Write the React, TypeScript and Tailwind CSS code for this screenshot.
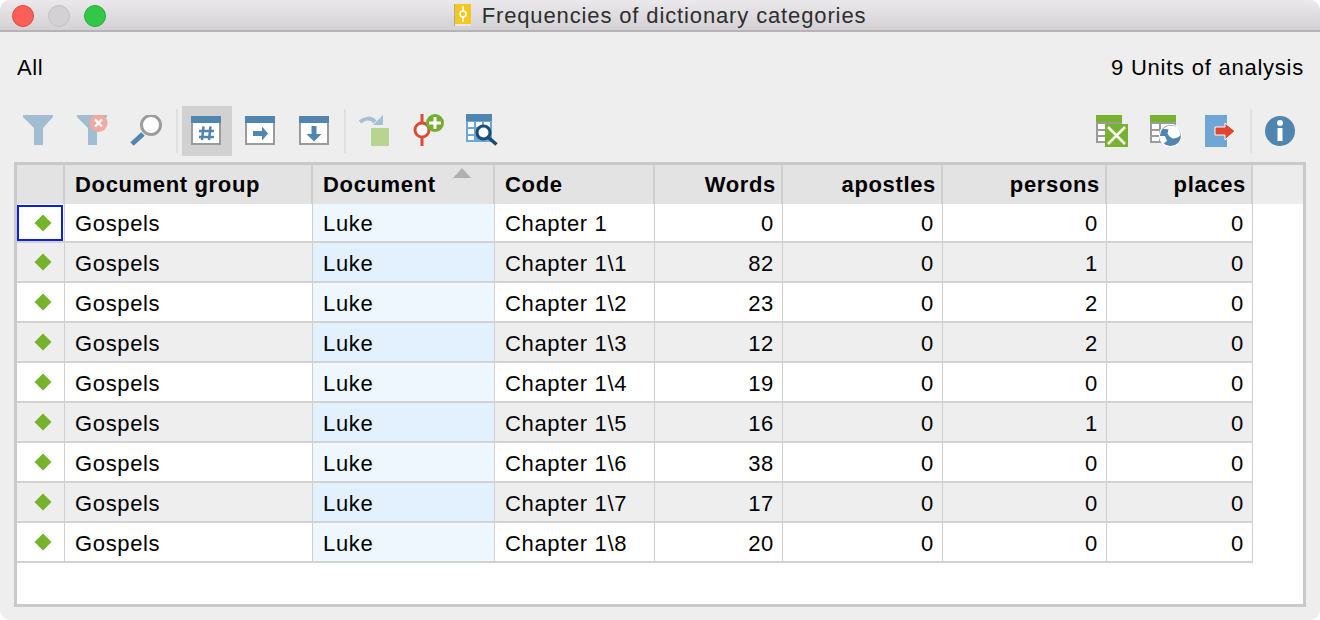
const FONT = "font-['Liberation_Sans',Arial,sans-serif]";

function Filter({ badge }: { badge?: boolean }) {
  return (
    <svg width="32" height="32" viewBox="-1 1 32 32">
      <path d="M0 1h30v2L20 14v17h-9V14L0 3z" fill="#a2bcd2" />
      {badge && (
        <>
          <circle cx="21.500" cy="9" r="9" fill="#efaba0" />
          <path d="M18 5.500l7 7M25 5.500l-7 7" stroke="#fff" strokeWidth="2.400" />
        </>
      )}
    </svg>
  );
}

function Magnifier() {
  return (
    <svg width="32" height="32" viewBox="0 1 32 32">
      <path d="M2 30l11-10" stroke="#5085b0" strokeWidth="5" />
      <circle cx="21" cy="11" r="9.500" fill="#fff" stroke="#9c9c9c" strokeWidth="3" />
    </svg>
  );
}

function WinIcon({ children }: { children: React.ReactNode }) {
  return (
    <svg width="30" height="30" viewBox="0 0 30 30" className="-translate-x-px">
      <rect x="1" y="3" width="28" height="25" fill="#fff" stroke="#9b9b9b" strokeWidth="2" />
      <rect x="0" y="0" width="30" height="7" fill="#5085b0" />
      {children}
    </svg>
  );
}

function Undo() {
  return (
    <svg width="32" height="32" viewBox="0 1 32 32">
      <rect x="12" y="14" width="18" height="18" fill="#b7d491" />
      <path d="M1 8c5-4 11-5 15 0" fill="none" stroke="#a6c0d6" strokeWidth="4" />
      <path d="M14 11h10V1z" fill="#a6c0d6" />
    </svg>
  );
}

function CodePlus() {
  return (
    <svg width="32" height="34" viewBox="0 1 32 34">
      <path d="M9 1v32" stroke="#df4a35" strokeWidth="3" />
      <circle cx="9" cy="17" r="7" fill="#fff" stroke="#df4a35" strokeWidth="3" />
      <circle cx="22" cy="10" r="9" fill="#72ae2b" />
      <path d="M22 4v12M16 10h12" stroke="#fff" strokeWidth="3" />
    </svg>
  );
}

function TableSearch() {
  return (
    <svg width="34" height="34" viewBox="0 0 34 34">
      <rect x="0" y="0" width="26" height="28" fill="#6ea6d5" />
      <rect x="0" y="0" width="26" height="7" fill="#5085b0" />
      <path d="M2 8h6v5H2zM10 8h6v5h-6zM18 8h6v5h-6zM2 15h6v5H2zM2 22h6v4H2z" fill="#fff" />
      <circle cx="17.500" cy="18.500" r="6.500" fill="#fff" stroke="#1b4d7a" strokeWidth="3" />
      <path d="M22.500 23.500l8 7" stroke="#1b4d7a" strokeWidth="3.500" />
    </svg>
  );
}

function SmallGrid({ color }: { color: string }) {
  return (
    <>
      <rect x="0" y="0" width="26" height="28" fill="#9b9b9b" />
      <rect x="0" y="0" width="26" height="7" fill={color} />
      <path d="M2 9h7v5H2zM11 9h7v5h-7zM19 9h5v5h-5zM2 16h7v4H2zM2 22h7v4H2zM11 16h7v4h-7z" fill="#fff" />
    </>
  );
}

function Excel() {
  return (
    <svg width="32" height="32" viewBox="0 0 32 32">
      <SmallGrid color="#77b32e" />
      <rect x="9" y="9" width="23" height="23" fill="#77b32e" />
      <path d="M12 12l17 17M29 12L12 29" stroke="#fff" strokeWidth="2.500" />
    </svg>
  );
}

function Globe() {
  return (
    <svg width="32" height="32" viewBox="0 0 32 32">
      <SmallGrid color="#77b32e" />
      <circle cx="20.500" cy="20.500" r="11.500" fill="#fff" />
      <circle cx="20.500" cy="20.500" r="10.500" fill="#5085b0" />
      <path d="M13 14c2-2 5-3.500 7-3.500 4 0 6 1 7.500 2 2 2 3 5 3 8-2 2-5 3-8 3-2-1-4-3-5-5l1-4c-2-1-3.500-.5-5.500-.5zM10 21h5l2 5-4 3c-2-2-3-5-3-8z" fill="#fff" />
    </svg>
  );
}

function Exit() {
  return (
    <svg width="32" height="32" viewBox="-1 0 32 32">
      <rect x="0" y="0" width="22" height="32" fill="#6ea6d5" />
      <path d="M10 12h10V8l10 8-10 9v-5H10z" fill="#e2452f" stroke="#fff" strokeWidth="1" />
    </svg>
  );
}

function Info() {
  return (
    <svg width="30" height="30" viewBox="0 0 30 30">
      <circle cx="15" cy="15" r="15" fill="#5085b0" />
      <circle cx="15" cy="7" r="3" fill="#fff" />
      <rect x="12.500" y="12" width="5" height="13" fill="#fff" />
    </svg>
  );
}

function Tool({ children, active }: { children: React.ReactNode; active?: boolean }) {
  return (
    <div className={`flex h-[50px] w-[50px] items-center justify-center ${active ? "bg-[#d1d1d1]" : ""}`}>
      {children}
    </div>
  );
}

function Sep({ className = "" }: { className?: string }) {
  return <div className={`h-[44px] w-[2px] bg-[#e0e0e0] ${className}`} />;
}

const rows = [
  ["Chapter 1", "0", "0", "0", "0"],
  ["Chapter 1\\1", "82", "0", "1", "0"],
  ["Chapter 1\\2", "23", "0", "2", "0"],
  ["Chapter 1\\3", "12", "0", "2", "0"],
  ["Chapter 1\\4", "19", "0", "0", "0"],
  ["Chapter 1\\5", "16", "0", "1", "0"],
  ["Chapter 1\\6", "38", "0", "0", "0"],
  ["Chapter 1\\7", "17", "0", "0", "0"],
  ["Chapter 1\\8", "20", "0", "0", "0"],
];

const GRID = "grid grid-cols-[48px_248px_182px_160px_128px_160px_164px_146px]";

function Head({ children, right, extra }: { children?: React.ReactNode; right?: boolean; extra?: React.ReactNode }) {
  return (
    <div
      className={`relative flex h-full items-center border-r-2 border-r-[#cfcfcf] bg-[#e3e3e3] font-bold ${
        right ? "justify-end pr-[5px]" : "pl-[10px]"
      }`}
    >
      {children}
      {extra}
    </div>
  );
}

function Cell({ children, right, className = "" }: { children: React.ReactNode; right?: boolean; className?: string }) {
  return (
    <div
      className={`flex h-full items-center border-r border-r-[#cfcfcf] pt-[2px] ${
        right ? "justify-end pr-[8px]" : "pl-[10px]"
      } ${className}`}
    >
      {children}
    </div>
  );
}

export default function App() {
  return (
    <div className={`flex h-[620px] w-[1320px] flex-col overflow-hidden rounded-[10px] bg-[#eeeeee] text-[22px] tracking-[0.65px] text-black ${FONT}`}>
      <div className="relative flex h-[32px] shrink-0 items-center justify-center border-b-2 border-b-[#b5b3b5] bg-gradient-to-b from-[#ebe9eb] to-[#d3d1d3]">
        <div className="absolute left-[12px] top-[5px] flex gap-[14px]">
          <span className="h-[22px] w-[22px] rounded-full border border-[#e2463f] bg-[#fc5f57]" />
          <span className="h-[22px] w-[22px] rounded-full border border-[#c2c2c2] bg-[#d2d2d2]" />
          <span className="h-[22px] w-[22px] rounded-full border border-[#25a93a] bg-[#33c748]" />
        </div>
        <svg width="17" height="23" viewBox="0 0 17 23" className="mr-[11px]">
          <rect x="0" y="0" width="16" height="22" fill="#a9a9a9" />
          <rect x="1" y="0" width="16" height="20" fill="#f4c81e" />
          <rect x="1" y="20" width="16" height="2" fill="#e6e6e6" />
          <path d="M9 2v16" stroke="#fff" strokeWidth="1.500" />
          <circle cx="9" cy="10" r="3" fill="#f4c81e" stroke="#fff" strokeWidth="1.500" />
        </svg>
        <span className="tracking-[0.87px] text-[#2e2e2e]">Frequencies of dictionary categories</span>
      </div>

      <div className="flex h-[40px] shrink-0 items-center justify-between pl-[17px] pr-[16px] pt-[30px]">
        <span>All</span>
        <span className="tracking-[0.76px]">9 Units of analysis</span>
      </div>

      <div className="mt-[34px] flex h-[50px] shrink-0 items-center justify-between pl-[13px] pr-[15px]">
        <div className="flex items-center gap-[4px]">
          <Tool><Filter /></Tool>
          <Tool><Filter badge /></Tool>
          <Tool><Magnifier /></Tool>
          <Sep className="ml-[1px]" />
          <Tool active>
            <WinIcon>
              <path d="M12.500 10.500L11 24M19.500 10.500L18 24M8 15h15M8 21h15" stroke="#5085b0" strokeWidth="2.500" />
            </WinIcon>
          </Tool>
          <Tool>
            <WinIcon>
              <path d="M8 15h9v-4.500l6 7-6 7v-4.500H8z" fill="#5085b0" />
            </WinIcon>
          </Tool>
          <Tool>
            <WinIcon>
              <path d="M12.500 10h5v8h5L15 25.500 7.500 18h5z" fill="#5085b0" />
            </WinIcon>
          </Tool>
          <Sep />
          <Tool><Undo /></Tool>
          <Tool><CodePlus /></Tool>
          <Tool><TableSearch /></Tool>
        </div>
        <div className="flex items-center gap-[4px]">
          <Tool><Excel /></Tool>
          <Tool><Globe /></Tool>
          <Tool><Exit /></Tool>
          <Sep className="ml-[1px] mr-[-1px]" />
          <Tool><Info /></Tool>
        </div>
      </div>

      <div className="ml-[14px] mt-[6px] flex h-[445px] w-[1292px] shrink-0 flex-col border-[3px] border-[#c9c9c9] bg-white">
        <div className="flex h-[39px] shrink-0 bg-[#ececec]">
          <div className={`${GRID} h-full`}>
            <Head />
            <Head>Document group</Head>
            <Head
              extra={
                <svg width="18" height="10" viewBox="0 0 18 10" className="absolute right-[22px] top-[3px]">
                  <path d="M9 0l9 10H0z" fill="#b0b0b0" />
                </svg>
              }
            >
              Document
            </Head>
            <Head>Code</Head>
            <Head right>Words</Head>
            <Head right>apostles</Head>
            <Head right>persons</Head>
            <Head right>places</Head>
          </div>
        </div>
        {rows.map((r, i) => (
          <div
            key={r[0]}
            className={`${GRID} w-fit border-b-2 border-b-[#d2d2d2] ${i === 0 ? "h-[39px]" : "h-[40px]"} ${
              i % 2 ? "bg-[#eeeeee]" : "bg-white"
            }`}
          >
            <Cell className="!items-start !pl-0 !pt-[1px]">
              <span
                className={`flex h-[36px] w-[46px] items-center justify-center pl-[5px] ${
                  i === 0 ? "border-2 border-[#0c1fe6]" : ""
                }`}
              >
                <span className="h-[12px] w-[12px] rotate-45 bg-[#74b32c]" />
              </span>
            </Cell>
            <Cell>Gospels</Cell>
            <Cell className={i % 2 ? "bg-[#e2f1fd]" : "bg-[#eff7fe]"}>Luke</Cell>
            <Cell>{r[0]}</Cell>
            <Cell right>{r[1]}</Cell>
            <Cell right>{r[2]}</Cell>
            <Cell right>{r[3]}</Cell>
            <Cell right>{r[4]}</Cell>
          </div>
        ))}
      </div>
    </div>
  );
}
